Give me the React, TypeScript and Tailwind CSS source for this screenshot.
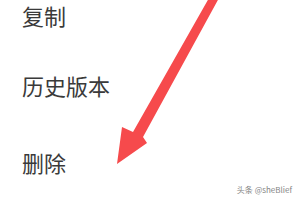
import React from 'react';

const items = [
  { label: '复制', mt: 'mt-[4px]' },
  { label: '历史版本', mt: 'mt-[48px]' },
  { label: '删除', mt: 'mt-[55px]' },
];

export default function App() {
  return (
    <div className="relative w-[300px] h-[200px] overflow-hidden bg-white font-['Noto_Sans_CJK_SC',sans-serif]">
      <ul className="flex flex-col pl-[22px]">
        {items.map(item => (
          <li key={item.label} className={`${item.mt} text-[22px] leading-[22px] text-[#3a3a3a]`}>
            {item.label}
          </li>
        ))}
      </ul>

      {/* red annotation arrow */}
      <svg className="absolute inset-0" width="300" height="200" viewBox="0 0 300 200">
        <polygon
          points="117,164 122,127 133,132 209,-2 219,-2 143,137 147,143"
          fill="#f64a4c"
          strokeLinejoin="round"
        />
      </svg>

      <div className="absolute right-[8px] bottom-[5px] text-[8px] leading-[10px] text-[#666] opacity-80">
        头条 @sheBlief
      </div>
    </div>
  );
}
